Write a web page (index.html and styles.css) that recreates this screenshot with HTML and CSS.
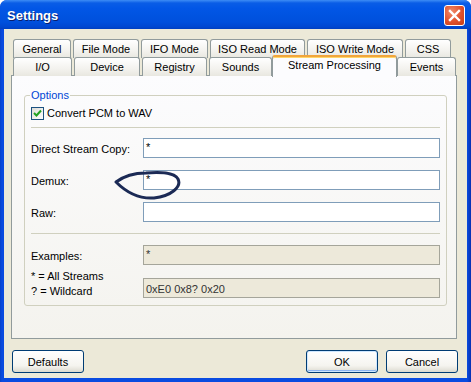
FILE: index.html
```html
<!DOCTYPE html>
<html lang="en">
<head>
    <meta charset="UTF-8">
    <title>Settings</title>
    <link rel="stylesheet" href="styles.css">
</head>
<body>
    <div class="window">
        <!-- Title bar -->
        <div class="titlebar">
            <span class="title">Settings</span>
            <div class="close-btn">
                <svg width="13" height="13" viewBox="0 0 13 13">
                    <path d="M2,2 L11,11 M11,2 L2,11" stroke="#fff" stroke-width="2.4" stroke-linecap="square"/>
                </svg>
            </div>
        </div>

        <div class="frame">
            <!-- Tabs -->
            <div class="tabs">
                <div class="tab-row row-back">
                    <div class="tab">General</div>
                    <div class="tab">File Mode</div>
                    <div class="tab">IFO Mode</div>
                    <div class="tab">ISO Read Mode</div>
                    <div class="tab">ISO Write Mode</div>
                    <div class="tab">CSS</div>
                </div>
                <div class="tab-row row-front">
                    <div class="tab">I/O</div>
                    <div class="tab">Device</div>
                    <div class="tab">Registry</div>
                    <div class="tab">Sounds</div>
                    <div class="tab selected">Stream Processing</div>
                    <div class="tab">Events</div>
                </div>
            </div>

            <div class="panel">
                <fieldset class="group">
                    <legend>Options</legend>
                    <label class="check-row">
                        <span class="checkbox">
                            <svg width="9" height="9" viewBox="0 0 9 9">
                                <path d="M1,4 L3.5,6.5 L8,1.5" stroke="#21a121" stroke-width="2" fill="none"/>
                            </svg>
                        </span>
                        Convert PCM to WAV
                    </label>

                    <div class="sep"></div>

                    <div class="fields">
                        <span class="field-label">Direct Stream Copy:</span>
                        <div class="edit">*</div>

                        <span class="field-label">Demux:</span>
                        <div class="edit marked">
                            *
                            <svg class="scribble" width="70" height="32" viewBox="0 0 70 32">
                                <path d="M2,12 C10,6 20,3 32,3 C46,2 60,2 64,9 C68,17 57,26 40,28 C26,29 14,24 2,12 Z" stroke="#1b2a55" stroke-width="3" fill="none" stroke-linejoin="round"/>
                            </svg>
                        </div>

                        <span class="field-label">Raw:</span>
                        <div class="edit"></div>
                    </div>

                    <div class="sep"></div>

                    <div class="fields examples">
                        <span class="field-label">Examples:</span>
                        <div class="edit disabled">*</div>

                        <span class="field-label legend-text">* = All Streams<br>? = Wildcard</span>
                        <div class="edit disabled sample">0xE0 0x8? 0x20</div>
                    </div>
                </fieldset>
            </div>

            <!-- Dialog buttons -->
            <div class="buttons">
                <button class="btn">Defaults</button>
                <span class="spacer"></span>
                <button class="btn default">OK</button>
                <button class="btn">Cancel</button>
            </div>
        </div>
    </div>
</body>
</html>
```

FILE: styles.css
```css
body {
    margin: 0;
    padding: 0;
    background-color: #ffffff;
    font-family: "Liberation Sans", Arial, sans-serif;
    font-size: 11px;
    color: #000;
}

/* Window frame */
.window {
    width: 471px;
    height: 382px;
    box-sizing: border-box;
    padding: 0 4px 4px 4px;
    background: linear-gradient(to right, #0842c8, #0a4be0 2px, #0a4be0 467px, #0831b0);
    border-radius: 7px 7px 0 0;
    display: flex;
    flex-direction: column;
}

.titlebar {
    height: 29px;
    margin: 0 -4px;
    padding: 0 6px 0 7px;
    display: flex;
    align-items: center;
    justify-content: space-between;
    border-radius: 7px 7px 0 0;
    background: linear-gradient(to bottom, #3d8cf5 0px, #0a5de6 3px, #0256e6 8px, #0053e0 16px, #0050dd 22px, #0047d0 27px, #003fc0 29px);
}

.title {
    color: #fff;
    font-weight: bold;
    font-size: 13px;
    font-family: "Liberation Sans", Arial, sans-serif;
    text-shadow: 1px 1px 0 #0a1e6c;
    margin-top: 1px;
}

.close-btn {
    width: 19px;
    height: 19px;
    border: 1px solid #fff;
    border-radius: 3px;
    background: radial-gradient(circle at 35% 30%, #f08a6a, #e0502c 55%, #c53d16);
    display: flex;
    align-items: center;
    justify-content: center;
    margin-top: 1px;
}

.frame {
    flex: 1;
    background-color: #ece9d8;
    display: flex;
    flex-direction: column;
}

/* Tabs */
.tabs {
    padding: 10px 0 0 9px;
}

.tab-row {
    display: grid;
    column-gap: 2px;
    height: 18px;
}

.row-back {
    grid-template-columns: 58px 66px 67px 95px 96px 46px;
}

.row-front {
    grid-template-columns: 59px 66px 65px 63px 121px 59px;
    position: relative;
    z-index: 1;
}

.tab {
    box-sizing: border-box;
    height: 19px;
    border: 1px solid #919b9c;
    border-bottom: none;
    border-radius: 3px 3px 0 0;
    background: linear-gradient(to bottom, #ffffff, #f3f2ee 60%, #e8e7e0);
    text-align: center;
    line-height: 18px;
    white-space: nowrap;
}

.tab.selected {
    position: relative;
    z-index: 2;
    margin: -2px -2px 0 -2px;
    height: 22px;
    border-top: 2px solid #f1a53c;
    box-shadow: inset 0 1px 0 #ffd66a;
    background: #fcfcfe;
    line-height: 16px;
}

/* Tab page */
.panel {
    box-sizing: border-box;
    margin-left: 7px;
    width: 446px;
    height: 264px;
    border: 1px solid #919b9c;
    background: linear-gradient(to bottom, #fcfcfe, #f4f3ee);
}

.group {
    margin: 13px 9px 0 12px;
    padding: 0 6px 6px 6px;
    border: 1px solid #d0d0bf;
    border-radius: 3px;
    min-width: 0;
}

.group legend {
    color: #0046d5;
    padding: 0 1px;
    margin-left: -1px;
    line-height: 13px;
}

.check-row {
    display: flex;
    align-items: center;
    gap: 3px;
    height: 14px;
    margin-top: 4px;
}

.checkbox {
    box-sizing: border-box;
    width: 13px;
    height: 13px;
    border: 1px solid #1c5180;
    background: linear-gradient(135deg, #dcdcd7, #ffffff);
    display: flex;
    align-items: center;
    justify-content: center;
}

.sep {
    height: 1px;
    background-color: #d0d0bf;
    margin-top: 7px;
}

.fields {
    display: grid;
    grid-template-columns: 112px 297px;
    grid-auto-rows: 20px;
    row-gap: 12px;
    align-items: center;
    margin-top: 10px;
    margin-bottom: 11px;
}

.field-label {
    padding-top: 1px;
}

.examples {
    grid-auto-rows: auto;
    row-gap: 3px;
    margin-top: 11px;
    margin-bottom: 0;
}

.edit {
    box-sizing: border-box;
    height: 20px;
    border: 1px solid #7f9db9;
    background-color: #fff;
    padding: 1px 2px;
    line-height: 14px;
}

.edit.marked {
    position: relative;
}

.scribble {
    position: absolute;
    left: -30px;
    top: -1px;
}

.edit.disabled {
    border-color: #a5a59a;
    background-color: #ede9da;
    color: #333;
}

.edit.sample {
    align-self: end;
    margin-bottom: 1px;
    padding-top: 3px;
}

.legend-text {
    line-height: 15px;
}

/* Dialog buttons */
.buttons {
    display: flex;
    gap: 8px;
    margin: 11px 9px 0 8px;
}

.spacer {
    flex: 1;
}

.btn {
    width: 72px;
    height: 23px;
    border: 1px solid #003c74;
    border-radius: 3px;
    background: linear-gradient(to bottom, #ffffff, #f5f4ef 70%, #dcdad0);
    font-family: "Liberation Sans", Arial, sans-serif;
    font-size: 11px;
    color: #000;
    padding: 0;
}

.btn.default {
    box-shadow: inset 0 0 0 1px #cee7ff, inset 0 -1px 0 1px #8cb4f2;
}
```
